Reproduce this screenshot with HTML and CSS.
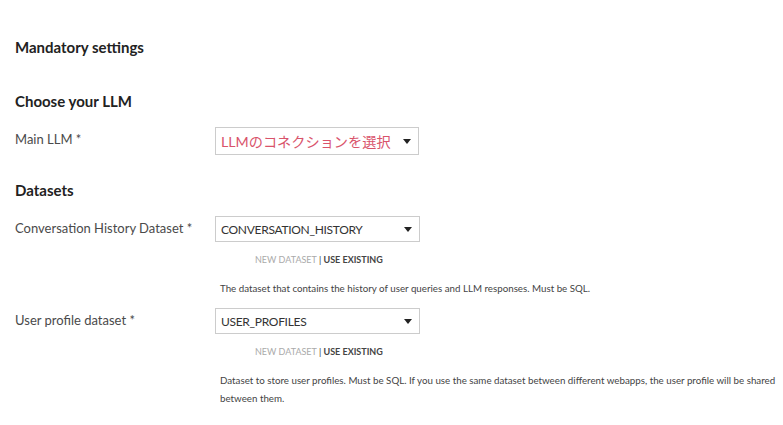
FILE: index.html
```html
<!DOCTYPE html>
<html>
<head>
<meta charset="utf-8">
<link rel="stylesheet" href="styles.css">
</head>
<body>
<div class="page">
  <h2 class="title">Mandatory settings</h2>
  <h3 class="section">Choose your LLM</h3>
  <div class="row row-llm">
    <label class="label">Main LLM *</label>
    <div class="control">
      <div class="select select-llm"><span class="placeholder">LLMのコネクションを選択</span><span class="caret"></span></div>
    </div>
  </div>
  <h3 class="section section-ds">Datasets</h3>
  <div class="row">
    <label class="label">Conversation History Dataset *</label>
    <div class="control">
      <div class="select"><span class="value">CONVERSATION_HISTORY</span><span class="caret"></span></div>
      <div class="switch"><span class="off">NEW DATASET</span> | <span class="on">USE EXISTING</span></div>
      <div class="help">The dataset that contains the history of user queries and LLM responses. Must be SQL.</div>
    </div>
  </div>
  <div class="row row-next">
    <label class="label">User profile dataset *</label>
    <div class="control">
      <div class="select"><span class="value">USER_PROFILES</span><span class="caret"></span></div>
      <div class="switch"><span class="off">NEW DATASET</span> | <span class="on">USE EXISTING</span></div>
      <div class="help">Dataset to store user profiles. Must be SQL. If you use the same dataset between different webapps, the user profile will be shared between them.</div>
    </div>
  </div>
</div>
</body>
</html>
```
FILE: styles.css
```css
* { box-sizing: border-box; }
body {
  margin: 0;
  background: #fff;
  font-family: "Source Sans Pro", Lato, "Noto Sans CJK JP", sans-serif;
  color: #333;
}
.page { padding: 0 0 0 15px; }
.title {
  margin: 0;
  padding-top: 38px;
  font-size: 15px;
  font-weight: 700;
  line-height: 18px;
  color: #222;
}
.section {
  margin: 36px 0 0;
  font-size: 15px;
  font-weight: 700;
  line-height: 18px;
  color: #222;
}
.section-ds { margin-top: 26px; }
.row {
  display: flex;
  margin-top: 17px;
}
.row-llm { margin-top: 17px; }
.row-next { margin-top: 11px; }
.label {
  width: 200px;
  font-size: 13px;
  line-height: 20px;
  color: #4a4a4a;
  padding-top: 2px;
}
.control { width: 568px; }
.select {
  width: 205px;
  height: 26px;
  border: 1px solid #ccc;
  display: flex;
  align-items: center;
  justify-content: space-between;
  padding: 0 7px 0 5px;
  font-size: 12px;
  letter-spacing: -0.3px;
  color: #333;
  white-space: nowrap;
}
.select-llm { width: 204px; height: 28px; }
.placeholder {
  color: #d9536b;
  font-size: 14.2px;
  font-family: Lato, "Noto Sans CJK JP", sans-serif;
  letter-spacing: 0;
}
.caret {
  width: 0; height: 0;
  flex: none;
  border-left: 4px solid transparent;
  border-right: 4px solid transparent;
  border-top: 5px solid #222;
}
.switch {
  margin-top: 12px;
  padding-left: 40px;
  font-size: 9px;
  line-height: 12px;
  color: #333;
  white-space: nowrap;
}
.switch .off { color: #aaa; }
.switch .on { font-weight: 700; color: #444; }
.help {
  margin-top: 13px;
  padding-left: 5px;
  font-size: 9.75px;
  line-height: 18px;
  color: #444;
}
```
